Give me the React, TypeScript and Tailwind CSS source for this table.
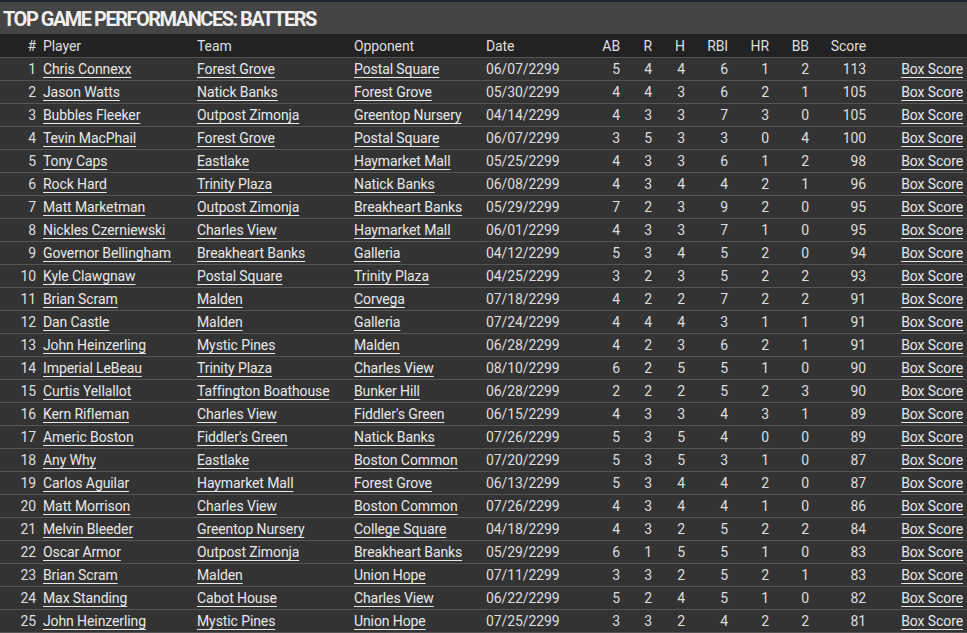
import React from 'react'

type Row = [string, string, string, string, number, number, number, number, number, number, number]

const rows: Row[] = [
  ['Chris Connexx', 'Forest Grove', 'Postal Square', '06/07/2299', 5, 4, 4, 6, 1, 2, 113],
  ['Jason Watts', 'Natick Banks', 'Forest Grove', '05/30/2299', 4, 4, 3, 6, 2, 1, 105],
  ['Bubbles Fleeker', 'Outpost Zimonja', 'Greentop Nursery', '04/14/2299', 4, 3, 3, 7, 3, 0, 105],
  ['Tevin MacPhail', 'Forest Grove', 'Postal Square', '06/07/2299', 3, 5, 3, 3, 0, 4, 100],
  ['Tony Caps', 'Eastlake', 'Haymarket Mall', '05/25/2299', 4, 3, 3, 6, 1, 2, 98],
  ['Rock Hard', 'Trinity Plaza', 'Natick Banks', '06/08/2299', 4, 3, 4, 4, 2, 1, 96],
  ['Matt Marketman', 'Outpost Zimonja', 'Breakheart Banks', '05/29/2299', 7, 2, 3, 9, 2, 0, 95],
  ['Nickles Czerniewski', 'Charles View', 'Haymarket Mall', '06/01/2299', 4, 3, 3, 7, 1, 0, 95],
  ['Governor Bellingham', 'Breakheart Banks', 'Galleria', '04/12/2299', 5, 3, 4, 5, 2, 0, 94],
  ['Kyle Clawgnaw', 'Postal Square', 'Trinity Plaza', '04/25/2299', 3, 2, 3, 5, 2, 2, 93],
  ['Brian Scram', 'Malden', 'Corvega', '07/18/2299', 4, 2, 2, 7, 2, 2, 91],
  ['Dan Castle', 'Malden', 'Galleria', '07/24/2299', 4, 4, 4, 3, 1, 1, 91],
  ['John Heinzerling', 'Mystic Pines', 'Malden', '06/28/2299', 4, 2, 3, 6, 2, 1, 91],
  ['Imperial LeBeau', 'Trinity Plaza', 'Charles View', '08/10/2299', 6, 2, 5, 5, 1, 0, 90],
  ['Curtis Yellallot', 'Taffington Boathouse', 'Bunker Hill', '06/28/2299', 2, 2, 2, 5, 2, 3, 90],
  ['Kern Rifleman', 'Charles View', "Fiddler's Green", '06/15/2299', 4, 3, 3, 4, 3, 1, 89],
  ['Americ Boston', "Fiddler's Green", 'Natick Banks', '07/26/2299', 5, 3, 5, 4, 0, 0, 89],
  ['Any Why', 'Eastlake', 'Boston Common', '07/20/2299', 5, 3, 5, 3, 1, 0, 87],
  ['Carlos Aguilar', 'Haymarket Mall', 'Forest Grove', '06/13/2299', 5, 3, 4, 4, 2, 0, 87],
  ['Matt Morrison', 'Charles View', 'Boston Common', '07/26/2299', 4, 3, 4, 4, 1, 0, 86],
  ['Melvin Bleeder', 'Greentop Nursery', 'College Square', '04/18/2299', 4, 3, 2, 5, 2, 2, 84],
  ['Oscar Armor', 'Outpost Zimonja', 'Breakheart Banks', '05/29/2299', 6, 1, 5, 5, 1, 0, 83],
  ['Brian Scram', 'Malden', 'Union Hope', '07/11/2299', 3, 3, 2, 5, 2, 1, 83],
  ['Max Standing', 'Cabot House', 'Charles View', '06/22/2299', 5, 2, 4, 5, 1, 0, 82],
  ['John Heinzerling', 'Mystic Pines', 'Union Hope', '07/25/2299', 3, 3, 2, 4, 2, 2, 81],
]

const link = 'underline underline-offset-[3px] decoration-[#e8e8e8] text-[#e8e8e8]'
const hl = 'font-normal text-left pl-[3px] pt-[2px]'
const hr = 'font-normal text-right pr-[4px] pt-[2px]'

export default function App() {
  return (
    <div className="w-[967px] h-[633px] overflow-hidden bg-[#333] text-[#dedede] text-[14px] font-['Roboto',sans-serif]">
      <div className="h-[2px] bg-[#1c2536]" />
      <div className="h-[32px] bg-[#454545] flex items-center px-[3px] pt-[2px]">
        <h1 className="text-[20px] font-bold text-[#f0f0f0] tracking-[-1.5px]">TOP GAME PERFORMANCES: BATTERS</h1>
      </div>
      <table className="table-fixed border-collapse w-full tracking-[-0.1px] leading-[19px]">
        <colgroup>
          <col className="w-[40px]" />
          <col className="w-[154px]" />
          <col className="w-[157px]" />
          <col className="w-[132px]" />
          <col className="w-[97px]" />
          <col className="w-[44px]" />
          <col className="w-[32px]" />
          <col className="w-[33px]" />
          <col className="w-[43px]" />
          <col className="w-[41px]" />
          <col className="w-[40px]" />
          <col className="w-[57px]" />
          <col className="w-[97px]" />
        </colgroup>
        <thead>
          <tr className="h-[23px] bg-[#222] border-b border-[#555]">
            <th className={hr}>#</th>
            <th className={hl}>Player</th>
            <th className={hl}>Team</th>
            <th className={hl}>Opponent</th>
            <th className={hl}>Date</th>
            <th className={hr}>AB</th>
            <th className={hr}>R</th>
            <th className={hr}>H</th>
            <th className={hr}>RBI</th>
            <th className={hr}>HR</th>
            <th className={hr}>BB</th>
            <th className={hr}>Score</th>
            <th />
          </tr>
        </thead>
        <tbody>
          {rows.map((r, i) => (
            <tr key={i} className="h-[23px] border-b border-[#555]">
              <td className="text-right pr-[4px] pt-[2px]">{i + 1}</td>
              <td className="pl-[3px] pt-[2px] whitespace-nowrap"><a className={link}>{r[0]}</a></td>
              <td className="pl-[3px] pt-[2px] whitespace-nowrap"><a className={link}>{r[1]}</a></td>
              <td className="pl-[3px] pt-[2px] whitespace-nowrap"><a className={link}>{r[2]}</a></td>
              <td className="pl-[3px] pt-[2px]">{r[3]}</td>
              {r.slice(4).map((v, j) => (
                <td key={j} className="text-right pr-[4px] pt-[2px]">{v}</td>
              ))}
              <td className="text-right pr-[4px] pt-[2px]"><a className={link}>Box Score</a></td>
            </tr>
          ))}
        </tbody>
      </table>
    </div>
  )
}
